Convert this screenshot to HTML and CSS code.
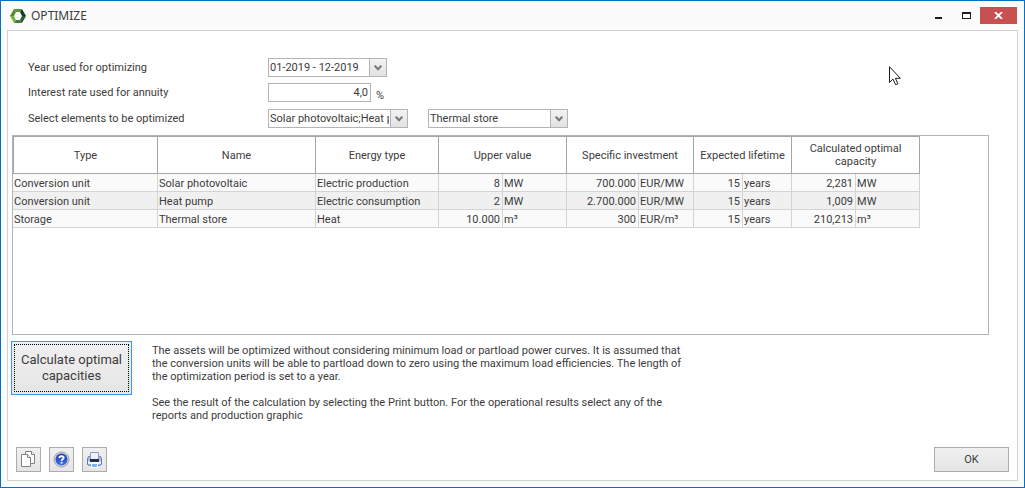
FILE: index.html
```html
<!DOCTYPE html>
<html lang="en">
<head>
<meta charset="utf-8">
<title>OPTIMIZE</title>
<link rel="stylesheet" href="styles.css">
</head>
<body>
<div class="window">
  <header class="titlebar">
    <svg class="logo" width="16" height="14" viewBox="0 0 16 14" aria-hidden="true">
      <path fill="#5d9433" d="M4 0h8l-2 3H6z"/>
      <path fill="#173d1c" d="M12 0l4 7h-4l-2-4z"/>
      <path fill="#2c5a33" d="M16 7l-4 7-2-3 2-4z"/>
      <path fill="#4b7a3c" d="M12 14H4l2-3h4z"/>
      <path fill="#7fae45" d="M4 14L0 7h4l2 4z"/>
      <path fill="#548a2e" d="M0 7l4-7 2 3-2 4z"/>
    </svg>
    <h1 class="title">OPTIMIZE</h1>
    <div class="winbuttons">
      <button class="winbtn" type="button" aria-label="Minimize"><svg width="9" height="9" viewBox="0 0 9 9"><path fill="#1e1e1e" d="M0 6h7v2H0z"/></svg></button>
      <button class="winbtn" type="button" aria-label="Maximize"><svg width="9" height="7" viewBox="0 0 9 7"><path fill="#1e1e1e" fill-rule="evenodd" d="M0 0h9v7H0zM1 2v4h7V2z"/></svg></button>
      <button class="winbtn winbtn-close" type="button" aria-label="Close"><svg width="9" height="7" viewBox="0 0 9 7"><path fill="none" stroke="#fff" stroke-width="1.8" d="M1 0l7 7M8 0L1 7"/></svg></button>
    </div>
  </header>

  <main class="panel">
    <form class="form">
      <label class="label" for="year">Year used for optimizing</label>
      <div class="controls">
        <span class="combo combo-year">
          <select id="year"><option>01-2019 - 12-2019</option></select>
          <span class="combo-arrow" aria-hidden="true"><svg width="8" height="6" viewBox="0 0 8 6"><path fill="none" stroke="#777" stroke-width="2" d="M.7.7L4 4.2 7.3.7"/></svg></span>
        </span>
      </div>
      <label class="label" for="rate">Interest rate used for annuity</label>
      <div class="controls controls-rate">
        <input class="rate" id="rate" type="text" value="4,0">
        <span class="unit">%</span>
      </div>
      <label class="label" for="elements">Select elements to be optimized</label>
      <div class="controls">
        <span class="combo">
          <select id="elements"><option>Solar photovoltaic;Heat pump</option></select>
          <span class="combo-arrow" aria-hidden="true"><svg width="8" height="6" viewBox="0 0 8 6"><path fill="none" stroke="#777" stroke-width="2" d="M.7.7L4 4.2 7.3.7"/></svg></span>
        </span>
        <span class="combo">
          <select aria-label="Storage elements"><option>Thermal store</option></select>
          <span class="combo-arrow" aria-hidden="true"><svg width="8" height="6" viewBox="0 0 8 6"><path fill="none" stroke="#777" stroke-width="2" d="M.7.7L4 4.2 7.3.7"/></svg></span>
        </span>
      </div>
    </form>

    <div class="grid">
      <table class="table">
        <colgroup>
          <col class="c-type"><col class="c-name"><col class="c-energy">
          <col class="c-mid"><col class="c-mid">
          <col class="c-invest"><col class="c-investunit">
          <col class="c-life"><col class="c-life">
          <col class="c-mid"><col class="c-mid">
        </colgroup>
        <thead>
          <tr>
            <th>Type</th><th>Name</th><th>Energy type</th>
            <th colspan="2">Upper value</th><th colspan="2">Specific investment</th>
            <th colspan="2">Expected lifetime</th><th colspan="2">Calculated optimal<br>capacity</th>
          </tr>
        </thead>
        <tbody>
          <tr><td>Conversion unit</td><td>Solar photovoltaic</td><td>Electric production</td><td class="num">8</td><td>MW</td><td class="num">700.000</td><td>EUR/MW</td><td class="num">15</td><td>years</td><td class="num">2,281</td><td>MW</td></tr>
          <tr><td>Conversion unit</td><td>Heat pump</td><td>Electric consumption</td><td class="num">2</td><td>MW</td><td class="num">2.700.000</td><td>EUR/MW</td><td class="num">15</td><td>years</td><td class="num">1,009</td><td>MW</td></tr>
          <tr><td>Storage</td><td>Thermal store</td><td>Heat</td><td class="num">10.000</td><td>m³</td><td class="num">300</td><td>EUR/m³</td><td class="num">15</td><td>years</td><td class="num">210,213</td><td>m³</td></tr>
        </tbody>
      </table>
    </div>

    <section class="action">
      <button class="btn btn-calc" type="button"><span class="btn-focus">Calculate optimal<br>capacities</span></button>
      <div class="notes">
        <p>The assets will be optimized without considering minimum load or partload power curves. It is assumed that<br>the conversion units will be able to partload down to zero using the maximum load efficiencies. The length of<br>the optimization period is set to a year.</p>
        <p>See the result of the calculation by selecting the Print button. For the operational results select any of the<br>reports and production graphic</p>
      </div>
    </section>

    <footer class="footer">
      <button class="btn btn-icon" type="button" aria-label="Copy">
        <svg width="15" height="17" viewBox="0 0 15 17"><g fill="#fff" stroke="#808080"><path d="M4.500 3.500v-3h6l3 3v9h-4"/><path d="M10.500.5v3h3"/><path d="M.5 3.500h6l3 3v9h-9z"/><path d="M6.500 3.500v3h3"/></g></svg>
      </button>
      <button class="btn btn-icon" type="button" aria-label="Help">
        <svg width="17" height="17" viewBox="0 0 17 17"><defs><linearGradient id="help" x2="0" y2="1"><stop stop-color="#1c3fae"/><stop offset="1" stop-color="#3f6fe8"/></linearGradient></defs><circle cx="8.500" cy="8.500" r="7.500" fill="#d4d7dd" stroke="#9aa0ac"/><circle cx="8.500" cy="8.500" r="6" fill="url(#help)"/><path fill="none" stroke="#fff" stroke-width="1.800" d="M6.300 6.900C6.300 4.700 10.700 4.700 10.700 6.800 10.700 8.200 8.600 8.200 8.600 9.800"/><path fill="#fff" d="M7.700 10.800h1.800v1.800H7.700z"/></svg>
      </button>
      <button class="btn btn-icon" type="button" aria-label="Print">
        <svg width="15" height="16" viewBox="0 0 15 16"><path fill="#a9b9de" stroke="#6179b4" d="M2.500 4.500h-1l-1 2v6l2 1h10l2-1v-6l-1-2h-1z"/><path fill="#e3eafa" d="M1 9h2v3H1zM12 9h2v3h-2z"/><path fill="#edf2fc" stroke="#8b9cc6" d="M3.500.5h8v7h-8z"/><path fill="#202c52" d="M3 7h9v3H3z"/><path fill="#fff" d="M3 10h9v2H3z"/><path fill="#79b6ee" stroke="#fff" d="M4.500 11.500h6v4h-6z"/></svg>
      </button>
      <button class="btn btn-ok" type="button">OK</button>
    </footer>
  </main>

  <svg class="pointer" width="13" height="20" viewBox="0 0 13 20" aria-hidden="true"><path fill="#fff" stroke="#1b1626" d="M.5.8v15.700l3.500-3.400 2.600 5.600 2.300-1-2.500-5.400h5z"/></svg>
</div>
</body>
</html>
```
FILE: styles.css
```css
* { box-sizing: border-box; }

body {
  margin: 0;
  font: 11px/13px Roboto, Tahoma, sans-serif;
  color: #3c3c3c;
}

button, input, select { font: inherit; color: inherit; }

.window {
  position: relative;
  display: flex;
  flex-direction: column;
  min-height: 100vh;
  padding: 0 6px 6px;
  border: 1px solid #0072c6;
  background: #fbfbfb;
}

.titlebar {
  display: flex;
  align-items: center;
  height: 29px;
  padding-left: 3px;
}

.title {
  margin: 0 auto 0 5px;
  font: 12px/18px "Noto Sans", "Segoe UI", sans-serif;
}

.winbuttons { display: flex; padding-right: 1px; }

.winbtn {
  display: grid;
  place-items: center;
  width: 27px;
  height: 17px;
  padding: 0;
  border: 0;
  background: none;
}

.winbtn-close {
  width: 37px;
  background: #c75050;
}

.panel {
  flex: 1;
  display: flex;
  flex-direction: column;
  padding: 27px 4px 8px;
  border: 1px solid #d2d2d2;
  background: #fff;
}

.form {
  display: grid;
  grid-template-columns: 240px 1fr;
  row-gap: 6px;
  padding-left: 16px;
}

.label { line-height: 19px; }

.controls {
  display: flex;
  gap: 20px;
}

.controls-rate {
  gap: 5px;
  height: 20px;
}

.combo {
  display: grid;
  grid-template-columns: 1fr 18px;
  width: 140px;
  height: 19px;
}

.combo-year { width: 119px; }

.combo select {
  grid-area: 1 / 1 / 2 / 3;
  appearance: none;
  min-width: 0;
  padding: 0 18px 0 1px;
  border: 1px solid #b4b4b4;
  border-radius: 0;
  background: #fff;
}

.combo-arrow {
  grid-area: 1 / 2;
  z-index: 1;
  display: grid;
  place-items: center;
  border: 1px solid #b4b4b4;
  background: linear-gradient(#f2f2f2, #e2e2e2);
  pointer-events: none;
}

.rate {
  width: 103px;
  height: 19px;
  padding: 0 2px;
  border: 1px solid #b4b4b4;
  text-align: right;
}

.unit { align-self: flex-end; line-height: 15px; }

.grid {
  flex: 1;
  min-height: 120px;
  margin: 7px 24px 0 0;
  border: 1px solid #b4b4b4;
}

.table {
  width: 907px;
  table-layout: fixed;
  border-spacing: 0;
}

.c-type { width: 145px; }
.c-name { width: 158px; }
.c-energy { width: 123px; }
.c-mid { width: 64px; }
.c-invest { width: 72px; }
.c-investunit { width: 55px; }
.c-life { width: 49px; }

.table th {
  height: 38px;
  padding: 0;
  border: solid #a6a6a6;
  border-width: 1px 1px 1px 0;
  font-weight: normal;
}

.table th:first-child { border-left-width: 1px; }

.table td {
  height: 18px;
  padding: 2px 1px 0;
  border: solid #d4d4d4;
  border-width: 0 1px 1px 0;
  background: #fafafa;
  white-space: nowrap;
}

.table tbody tr:nth-child(even) td { background: #f0f0f0; }

.table .num { padding-right: 2px; text-align: right; }

.action {
  display: flex;
  align-items: flex-start;
  gap: 20px;
  margin: 6px 0 0 -1px;
}

.btn {
  display: grid;
  place-items: center;
  padding: 0;
  border: 1px solid #acacac;
  background: linear-gradient(#f0f0f0, #e5e5e5);
}

.btn-calc {
  width: 121px;
  height: 54px;
  padding: 2px;
  place-items: stretch;
  border-color: #3399ff;
  font-size: 13px;
  line-height: 16px;
}

.btn-focus {
  display: grid;
  place-items: center;
  align-content: center;
  border: 1px dotted #000;
}

.notes { padding-top: 3px; }

.notes p { margin: 0; white-space: nowrap; }

.notes p + p { margin-top: 13px; }

.footer {
  display: flex;
  gap: 8px;
  margin-top: 25px;
  padding: 0 4px;
}

.btn-icon { width: 25px; height: 25px; }

.btn-ok {
  width: 75px;
  height: 25px;
  margin-left: auto;
}

.pointer {
  position: absolute;
  top: 65px;
  left: 888px;
  pointer-events: none;
}
```
